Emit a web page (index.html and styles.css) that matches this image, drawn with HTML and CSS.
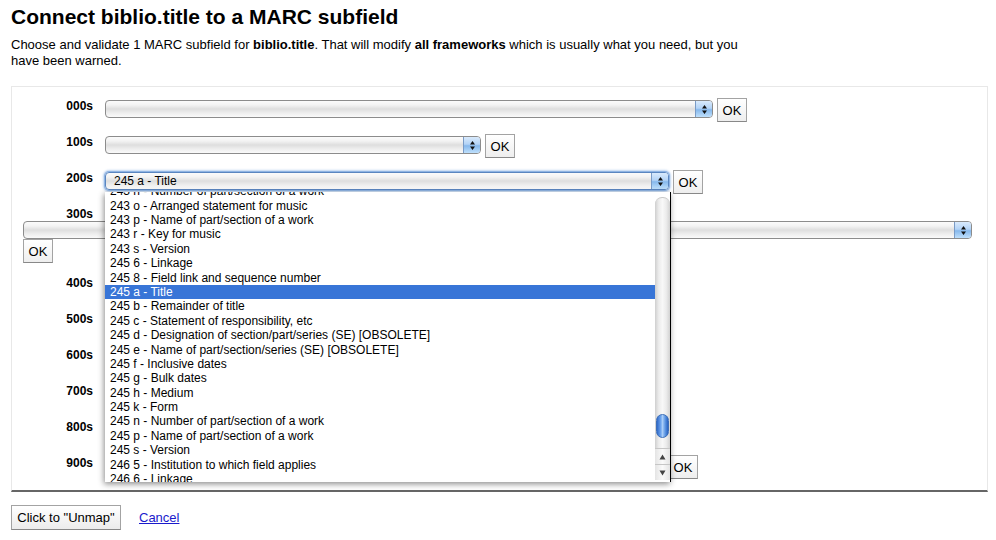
FILE: index.html
```html
<!DOCTYPE html>
<html>
<head>
<meta charset="utf-8">
<link rel="stylesheet" href="styles.css">
</head>
<body>
<h1 class="title">Connect biblio.title to a MARC subfield</h1>
<p class="intro">Choose and validate 1 MARC subfield for <b>biblio.title</b>. That will modify <b>all frameworks</b> which is usually what you need, but you have been warned.</p>

<div class="fieldset">
  <div class="row">
    <span class="lbl">000s</span>
    <span class="sel" style="width:608px"><span class="sel-body"></span><span class="sel-arrow"><svg width="7" height="11" viewBox="0 0 7 11"><path d="M3.5 1 L6 4.5 L1 4.5 Z M1 6.5 L6 6.5 L3.5 10 Z" fill="#111"/></svg></span></span>
    <button class="ok">OK</button>
  </div>
  <div class="row">
    <span class="lbl">100s</span>
    <span class="sel" style="width:376px"><span class="sel-body"></span><span class="sel-arrow"><svg width="7" height="11" viewBox="0 0 7 11"><path d="M3.5 1 L6 4.5 L1 4.5 Z M1 6.5 L6 6.5 L3.5 10 Z" fill="#111"/></svg></span></span>
    <button class="ok">OK</button>
  </div>
  <div class="row">
    <span class="lbl">200s</span>
    <span class="sel focus" style="width:564px"><span class="sel-body">245 a - Title</span><span class="sel-arrow"><svg width="7" height="11" viewBox="0 0 7 11"><path d="M3.5 1 L6 4.5 L1 4.5 Z M1 6.5 L6 6.5 L3.5 10 Z" fill="#111"/></svg></span>
      <div class="dropdown">
        <div class="opts">
          <div class="opt">243 n - Number of part/section of a work</div>
          <div class="opt">243 o - Arranged statement for music</div>
          <div class="opt">243 p - Name of part/section of a work</div>
          <div class="opt">243 r - Key for music</div>
          <div class="opt">243 s - Version</div>
          <div class="opt">245 6 - Linkage</div>
          <div class="opt">245 8 - Field link and sequence number</div>
          <div class="opt selected">245 a - Title</div>
          <div class="opt">245 b - Remainder of title</div>
          <div class="opt">245 c - Statement of responsibility, etc</div>
          <div class="opt">245 d - Designation of section/part/series (SE) [OBSOLETE]</div>
          <div class="opt">245 e - Name of part/section/series (SE) [OBSOLETE]</div>
          <div class="opt">245 f - Inclusive dates</div>
          <div class="opt">245 g - Bulk dates</div>
          <div class="opt">245 h - Medium</div>
          <div class="opt">245 k - Form</div>
          <div class="opt">245 n - Number of part/section of a work</div>
          <div class="opt">245 p - Name of part/section of a work</div>
          <div class="opt">245 s - Version</div>
          <div class="opt">246 5 - Institution to which field applies</div>
          <div class="opt">246 6 - Linkage</div>
        </div>
        <div class="sbar">
          <div class="sbar-track"><div class="sbar-thumb"></div></div>
          <div class="sbar-btn"><svg width="7" height="6" viewBox="0 0 7 6"><path d="M3.5 0.5 L6.5 5.5 L0.5 5.5 Z" fill="#444"/></svg></div>
          <div class="sbar-btn"><svg width="7" height="6" viewBox="0 0 7 6"><path d="M0.5 0.5 L6.5 0.5 L3.5 5.5 Z" fill="#444"/></svg></div>
        </div>
      </div>
    </span>
    <button class="ok">OK</button>
  </div>
  <div class="row">
    <span class="lbl">300s</span>
    <span class="sel" style="width:952px"><span class="sel-body"></span><span class="sel-arrow"><svg width="7" height="11" viewBox="0 0 7 11"><path d="M3.5 1 L6 4.5 L1 4.5 Z M1 6.5 L6 6.5 L3.5 10 Z" fill="#111"/></svg></span></span>
    <button class="ok">OK</button>
  </div>
  <div class="row">
    <span class="lbl">400s</span>
    <span class="sel" style="width:420px"><span class="sel-body"></span><span class="sel-arrow"></span></span>
    <button class="ok">OK</button>
  </div>
  <div class="row">
    <span class="lbl">500s</span>
    <span class="sel" style="width:300px"><span class="sel-body"></span><span class="sel-arrow"></span></span>
    <button class="ok">OK</button>
  </div>
  <div class="row">
    <span class="lbl">600s</span>
    <span class="sel" style="width:380px"><span class="sel-body"></span><span class="sel-arrow"></span></span>
    <button class="ok">OK</button>
  </div>
  <div class="row">
    <span class="lbl">700s</span>
    <span class="sel" style="width:250px"><span class="sel-body"></span><span class="sel-arrow"></span></span>
    <button class="ok">OK</button>
  </div>
  <div class="row">
    <span class="lbl">800s</span>
    <span class="sel" style="width:460px"><span class="sel-body"></span><span class="sel-arrow"></span></span>
    <button class="ok">OK</button>
  </div>
  <div class="row">
    <span class="lbl">900s</span>
    <span class="sel" style="width:559px"><span class="sel-body"></span><span class="sel-arrow"></span></span>
    <button class="ok">OK</button>
  </div>
</div>

<div class="actions">
  <button class="btn">Click to "Unmap"</button>
  <a class="cancel" href="#">Cancel</a>
</div>
</body>
</html>
```

FILE: styles.css
```css
html, body {
  background: #fff;
}
body {
  margin: 0 8px 0 11px;
  font-family: "Liberation Sans", Arial, sans-serif;
  color: #000;
}
.title {
  margin: 0;
  padding-top: 5px;
  font-size: 21px;
  line-height: 24px;
  font-weight: bold;
}
.intro {
  margin: 8px 0 0 0;
  max-width: 750px;
  font-size: 13px;
  line-height: 16px;
}
.fieldset {
  margin-top: 17px;
  border: 1px solid #e8e8e8;
  border-bottom: 2px solid #666;
  padding: 11px 11px 11px 11px;
}
.row {
  display: flex;
  flex-wrap: wrap;
  align-items: flex-start;
  margin-bottom: 12px;
}
.row:last-child {
  margin-bottom: 0;
}
.lbl {
  width: 70px;
  margin-right: 12px;
  margin-top: 1px;
  margin-bottom: -2px;
  text-align: right;
  font-weight: bold;
  font-size: 12px;
  line-height: 14px;
}
.sel {
  position: relative;
  display: flex;
  height: 18px;
  margin-top: 2px;
  margin-right: 4px;
  box-sizing: border-box;
  border: 1px solid #8c8c8c;
  border-radius: 4px;
  background: linear-gradient(#fbfbfb 0%, #f3f3f3 25%, #dedede 50%, #eeeeee 75%, #fafafa 100%);
  font-size: 12px;
}
.sel.focus {
  border-color: #5a86c0;
  box-shadow: 0 0 0 1px #8fb4e3, 0 0 2px 2px rgba(110, 160, 225, 0.45);
}
.sel-body {
  flex: 1;
  padding-left: 8px;
  line-height: 16px;
  white-space: nowrap;
}
.sel-arrow {
  width: 16px;
  display: flex;
  align-items: center;
  justify-content: center;
  border-left: 1px solid #7a9bc6;
  border-radius: 0 3px 3px 0;
  background: linear-gradient(#d9eafc 0%, #b3d3f6 45%, #86b8ec 55%, #bfe0fc 100%);
}
.ok {
  width: 30px;
  height: 24px;
  padding: 0;
  border: 1px solid #a3a3a3;
  border-bottom-color: #888;
  border-radius: 0;
  background: linear-gradient(#ffffff, #eeeeee);
  font-family: "Liberation Sans", Arial, sans-serif;
  font-size: 13px;
  color: #000;
}
.dropdown {
  position: absolute;
  left: -1px;
  top: 19px;
  width: 565px;
  height: 290px;
  background: #fff;
  border-right: 1px solid #000;
  box-shadow: -1px 2px 6px rgba(0, 0, 0, 0.45);
  overflow: hidden;
  z-index: 10;
  display: flex;
}
.opts {
  flex: 1;
  margin-top: -7.8px;
}
.opt {
  height: 14.4px;
  line-height: 14.4px;
  padding-left: 5px;
  font-size: 12px;
  white-space: nowrap;
  color: #000;
}
.opt.selected {
  background: #3875d7;
  color: #fff;
}
.sbar {
  width: 15px;
  display: flex;
  flex-direction: column;
  background: #fff;
}
.sbar-track {
  position: relative;
  flex: 1;
  margin-top: 5px;
  border-radius: 7px 7px 0 0;
  background: linear-gradient(90deg, #cfcfcf 0%, #ececec 25%, #f8f8f8 50%, #ececec 75%, #d2d2d2 100%);
  border-top: 1px solid #c8c8c8;
}
.sbar-thumb {
  position: absolute;
  left: 1px;
  right: 1px;
  top: 216px;
  height: 24px;
  border-radius: 7px;
  border: 1px solid #3d6fb8;
  box-sizing: border-box;
  background: linear-gradient(90deg, #2f69c8 0%, #6fa6ee 35%, #a9cdf8 50%, #5b95e2 75%, #2a62c0 100%);
}
.sbar-btn {
  height: 16px;
  display: flex;
  align-items: center;
  justify-content: center;
  border-top: 1px solid #c6c6c6;
  background: linear-gradient(90deg, #e4e4e4, #fafafa 50%, #e4e4e4);
  box-sizing: border-box;
}
.sbar-btn:last-child {
  margin-bottom: 2px;
}
.actions {
  margin-top: 13px;
  display: flex;
  align-items: center;
}
.btn {
  height: 25px;
  width: 110px;
  padding: 0;
  border: 1px solid #a3a3a3;
  border-bottom-color: #888;
  border-radius: 0;
  background: linear-gradient(#ffffff, #ececec);
  font-family: "Liberation Sans", Arial, sans-serif;
  font-size: 13px;
  color: #000;
}
.cancel {
  margin-left: 18px;
  font-size: 13px;
  color: #1a1acc;
  text-decoration: underline;
}
```
